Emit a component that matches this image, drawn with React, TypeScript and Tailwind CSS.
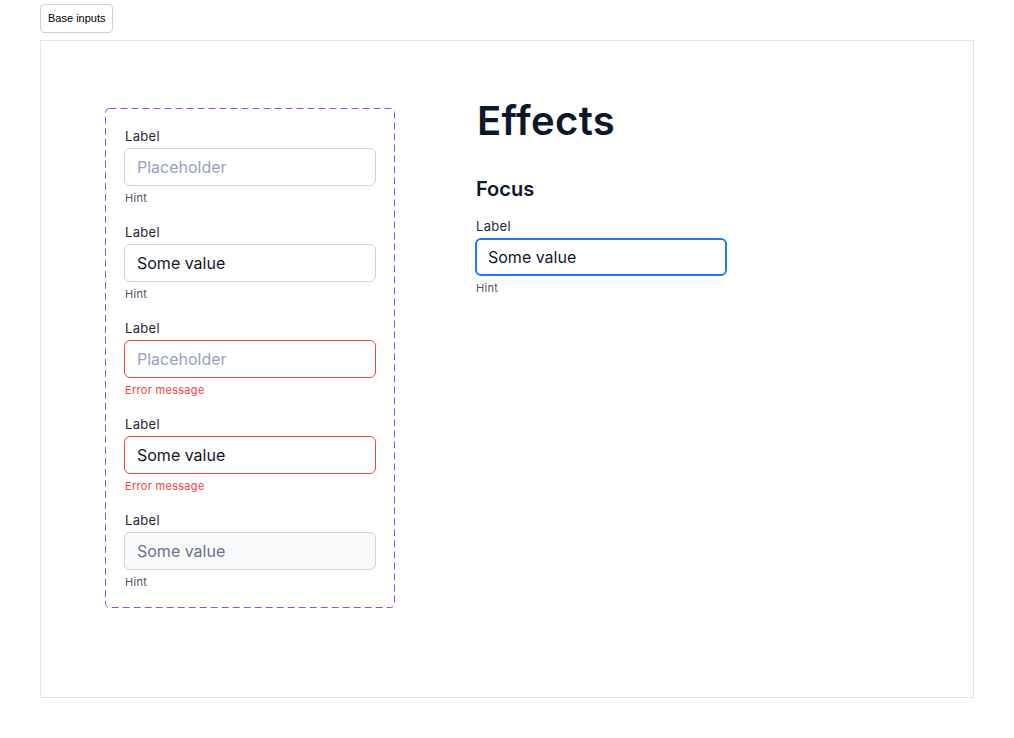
import React from 'react';
import clsx from 'clsx';

type FieldState = 'default' | 'error' | 'disabled' | 'focus';

interface FieldProps {
  value?: string;
  placeholder?: string;
  state?: FieldState;
  message: string;
}

const Field: React.FC<FieldProps> = ({ value, placeholder, state = 'default', message }) => {
  const isError = state === 'error';
  return (
    <div className="flex flex-col">
      <label className="pl-[1px] text-[13px] leading-[18px] tracking-[0.3px] text-[#1e293b] mb-[3px]">Label</label>
      <div
        className={clsx(
          'h-[38px] w-[252px] rounded-[6px] flex items-center',
          state === 'focus' ? 'border-2 border-[#2478f0] pl-[11px]' : 'border pl-[12px]',
          state === 'default' && 'border-[#cbd5e1] bg-white',
          isError && 'border-[#ef4444] bg-white',
          state === 'disabled' && 'border-[#cbd5e1] bg-[#f8fafc]'
        )}
      >
        <span
          className={clsx(
            'text-[16px] leading-5',
            !value && 'text-[#94a3b8]',
            value && state === 'disabled' && 'text-[#64748b]',
            value && state !== 'disabled' && 'text-[#0f172a]'
          )}
        >
          {value || placeholder}
        </span>
      </div>
      <span
        className={clsx(
          'pl-[1px] text-[11px] leading-[14px] tracking-[0.3px] mt-[5px]',
          isError ? 'text-[#ef4444]' : 'text-[#475569]'
        )}
      >
        {message}
      </span>
    </div>
  );
};

const App: React.FC = () => {
  return (
    <div className="min-h-screen bg-white px-[40px] pt-[4px]" style={{ fontFamily: 'Inter, "Noto Sans", sans-serif' }}>
      <button
        className="h-[29px] px-[7px] border border-[#cfcfcf] rounded-[4px] bg-white text-[11px] text-black"
        style={{ fontFamily: '"Liberation Sans", Arial, sans-serif' }}
      >
        Base inputs
      </button>
      <div className="mt-[7px] w-[934px] h-[658px] border border-[#e5e5e5] pl-[64px] pt-[67px] flex gap-[80px]">
        {/* dashed frame drawn as svg so the dash length matches */}
        <div className="relative w-[290px] h-[500px] p-[19px] flex flex-col gap-[18px]">
          <svg className="absolute inset-0 pointer-events-none" width="290" height="500">
            <rect x="0.5" y="0.5" width="289" height="499" rx="4" fill="none" stroke="#9747ff" strokeWidth="1" strokeDasharray="7 4" />
          </svg>
          <Field placeholder="Placeholder" message="Hint" />
          <Field value="Some value" message="Hint" />
          <Field placeholder="Placeholder" state="error" message="Error message" />
          <Field value="Some value" state="error" message="Error message" />
          <Field value="Some value" state="disabled" message="Hint" />
        </div>
        <div className="flex flex-col">
          <h1 className="mt-[-11px] ml-[2px] text-[40px] leading-[48px] font-semibold text-[#0f172a] tracking-[0.4px]">Effects</h1>
          <h2 className="mt-[30px] ml-[1px] text-[20px] leading-[28px] font-semibold text-[#0f172a]">Focus</h2>
          <div className="mt-[14px]">
            <Field value="Some value" state="focus" message="Hint" />
          </div>
        </div>
      </div>
    </div>
  );
};

export default App;
